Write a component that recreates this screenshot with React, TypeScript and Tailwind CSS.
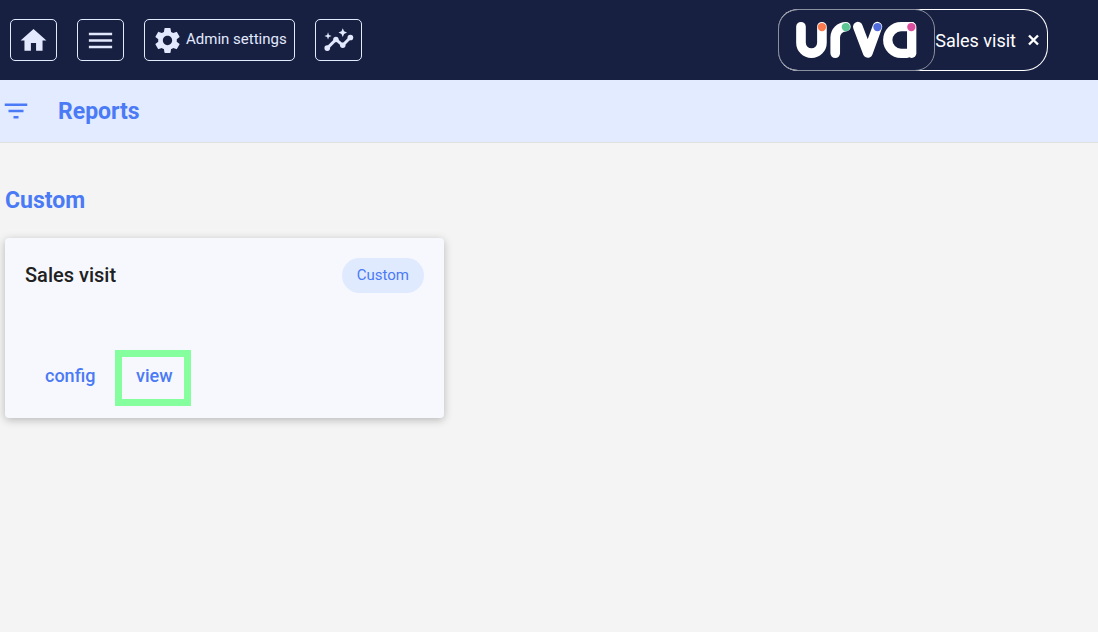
import React from "react";
import { MdFilterList, MdHome, MdMenu, MdSettings } from "react-icons/md";

function NavButton({ label, children }: { label?: string; children: React.ReactNode }) {
  return (
    <button
      type="button"
      aria-label={label}
      className="flex h-[42px] items-center gap-[3px] rounded-[5px] border border-[#e2eafe] px-[7px] text-[#e2e9fe]"
    >
      {children}
    </button>
  );
}

function InsightsIcon() {
  return (
    <svg viewBox="0 0 24 24" className="size-[31px]" fill="currentColor" aria-hidden="true">
      <path
        d="M3.3 17.9 L10 11.2 L15.3 15.7 L21.2 9.7"
        fill="none"
        stroke="currentColor"
        strokeWidth="2.3"
        strokeLinejoin="round"
      />
      <circle cx="3.3" cy="17.9" r="2.2" />
      <circle cx="10" cy="11.2" r="2.1" />
      <circle cx="15.3" cy="15.7" r="2.1" />
      <circle cx="21.2" cy="9.7" r="2.2" />
      <path d="M15.3 2.6 L16.3 4.9 L18.6 5.9 L16.3 6.9 L15.3 9.2 L14.3 6.9 L12 5.9 L14.3 4.9 Z" />
      <path d="M3.9 5.7 L4.6 7.8 L6.7 8.5 L4.6 9.2 L3.9 11.3 L3.2 9.2 L1.1 8.5 L3.2 7.8 Z" />
    </svg>
  );
}

function Logo() {
  return (
    <svg viewBox="75 60 370 120" className="h-10 w-[123px]" role="img" aria-label="urva">
      <g fill="none" stroke="#ffffff" strokeWidth="29" strokeLinecap="round">
        <path d="M93 80 V128 A31.5 31.5 0 0 0 156 128 V80" />
        <path d="M196 160 V112 A32 32 0 0 1 228 80" />
        <path d="M264 80 L294 159 L323 80" strokeLinejoin="round" />
        <path d="M425 80 H394 A40 40 0 0 0 394 160 H412" strokeWidth="28" />
        <path d="M426 80 V160" strokeWidth="28" />
      </g>
      <circle cx="156" cy="81" r="12.5" fill="#fb7a4e" />
      <circle cx="228" cy="81" r="12.5" fill="#5cc594" />
      <circle cx="323" cy="81" r="12.5" fill="#4f6bdc" />
      <circle cx="425" cy="81" r="12.5" fill="#dc4f9f" />
    </svg>
  );
}

export default function App() {
  return (
    <div className="min-h-screen bg-[#f4f4f4] font-['Roboto',sans-serif] text-[#212121]">
      <header className="flex h-20 items-center justify-between bg-[#182042] pr-[50px] pl-2.5">
        <nav className="flex items-center gap-5">
          <NavButton label="Home">
            <MdHome size={31} />
          </NavButton>
          <NavButton label="Menu">
            <MdMenu size={31} />
          </NavButton>
          <NavButton>
            <MdSettings size={31} />
            <span className="pb-0.5 text-[15px]">Admin settings</span>
          </NavButton>
          <NavButton label="Insights">
            <InsightsIcon />
          </NavButton>
        </nav>
        <div className="flex h-[62px] items-center rounded-l-[20px] rounded-r-[24px] border border-l-0 border-white text-white">
          <div className="-my-px flex h-[62px] items-center rounded-[20px] border border-[#8b90a1] px-4">
            <Logo />
          </div>
          <span className="text-[18px]">Sales visit</span>
          <button type="button" aria-label="Close" className="mr-[7px] ml-3">
            <svg viewBox="0 0 12 12" className="size-3" aria-hidden="true">
              <path d="M1 1.5 L10 10.5 M10 1.5 L1 10.5" stroke="currentColor" strokeWidth="2.4" />
            </svg>
          </button>
        </div>
      </header>

      <div className="flex h-[63px] items-center gap-[27px] border-b border-[#e0e0e0] bg-[#e2ebff] pl-px text-[#4a7af5]">
        <button type="button" aria-label="Filter">
          <MdFilterList size={30} />
        </button>
        <h1 className="pt-0.5 text-[23px] font-bold">Reports</h1>
      </div>

      <main className="px-[5px] pt-10">
        <h2 className="text-[23px] leading-9 font-bold text-[#4a7af5]">Custom</h2>
        <article className="mt-[19px] flex min-h-[180px] w-full max-w-[439px] flex-col justify-between rounded-[4px] bg-[#f6f8fe] p-5 pb-3 shadow-[0_2px_8px_rgba(0,0,0,0.25)]">
          <div className="flex items-center justify-between">
            <h3 className="pb-0.5 text-[20px] font-medium">Sales visit</h3>
            <span className="rounded-full bg-[#e0eaff] px-[15px] py-1.5 text-[15px] leading-[23px] text-[#4a7af5]">
              Custom
            </span>
          </div>
          <div className="flex items-center gap-5 pl-5 text-[18px] font-medium text-[#4a7af5]">
            <button type="button" className="pb-1.5">
              config
            </button>
            <button type="button" className="h-14 w-[76px] border-[7px] border-[#85ff9e] pb-1.5 pl-0.5">
              view
            </button>
          </div>
        </article>
      </main>
    </div>
  );
}
